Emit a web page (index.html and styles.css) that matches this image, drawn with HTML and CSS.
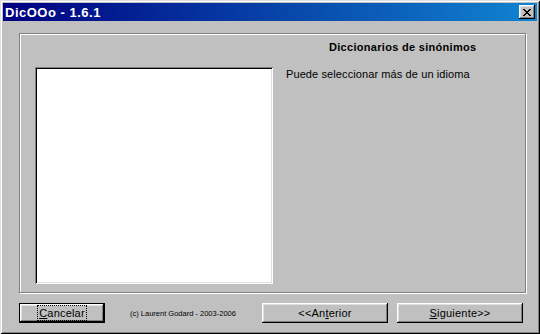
FILE: index.html
```html
<!DOCTYPE html>
<html>
<head>
<meta charset="utf-8">
<link rel="stylesheet" href="styles.css">
</head>
<body>
<div class="window">
  <div class="titlebar">
    <span class="title">DicOOo - 1.6.1</span>
    <span class="close"><svg width="8" height="7" viewBox="0 0 8 7"><path d="M0 0h2v1h1v1h2V1h1V0h2v1H7v1H6v1H5v1h1v1h1v1h1v1H6V6H5V5H3v1H2v1H0V6h1V5h1V4h1V3H2V2H1V1H0z" fill="#000"/></svg></span>
  </div>
  <div class="client">
    <div class="frame">
      <div class="heading">Diccionarios de sinónimos</div>
      <div class="listbox"></div>
      <div class="desc">Puede seleccionar más de un idioma</div>
    </div>
    <div class="buttons">
      <button class="btn default"><span class="focus"><u>C</u>ancelar</span></button>
      <span class="copy">(c) Laurent Godard - 2003-2006</span>
      <button class="btn wide prev">&lt;&lt;An<u>t</u>erior</button>
      <button class="btn wide next"><u>S</u>iguiente&gt;&gt;</button>
    </div>
  </div>
</div>
</body>
</html>
```

FILE: styles.css
```css
html, body {
  margin: 0;
  padding: 0;
  background: #c0c0c0;
}
body {
  font-family: "Liberation Sans", Arial, sans-serif;
  font-size: 11px;
  color: #000;
}
.window {
  width: 540px;
  height: 334px;
  box-sizing: border-box;
  padding: 3px;
  background: #c0c0c0;
  box-shadow: inset 1px 1px 0 #dfdfdf, inset -1px -1px 0 #000, inset 2px 2px 0 #fff, inset -2px -2px 0 #808080;
}
.titlebar {
  height: 18px;
  background: linear-gradient(90deg, #000080, #1084d0);
  display: flex;
  align-items: center;
  justify-content: space-between;
  padding: 0 2px 0 2px;
}
.title {
  color: #fff;
  font-weight: bold;
  font-size: 13px;
  letter-spacing: 0.5px;
}
.close {
  width: 16px;
  height: 14px;
  box-sizing: border-box;
  background: #c0c0c0;
  box-shadow: inset -1px -1px 0 #000, inset 1px 1px 0 #fff, inset -2px -2px 0 #808080, inset 2px 2px 0 #dfdfdf;
  display: flex;
  align-items: center;
  justify-content: center;
}
.close svg { display: block; margin-left: -1px; }
.client {
  padding: 12px 11px 0 16px;
}
.frame {
  width: 507px;
  height: 260px;
  box-sizing: border-box;
  border: 1px solid #808080;
  box-shadow: inset 1px 1px 0 #fff, 1px 1px 0 #fff;
  display: grid;
  grid-template-columns: 238px auto;
  grid-template-rows: 14px 217px;
  column-gap: 13px;
  row-gap: 13px;
  padding: 6px 0 0 15px;
}
.heading {
  grid-column: 2;
  grid-row: 1;
  font-weight: bold;
  font-size: 11px;
  line-height: 14px;
  padding-left: 43px;
  letter-spacing: 0.3px;
  white-space: nowrap;
}
.listbox {
  grid-column: 1;
  grid-row: 2;
  background: #fff;
  box-shadow: inset 1px 1px 0 #808080, inset -1px -1px 0 #fff, inset 2px 2px 0 #000, inset -2px -2px 0 #dfdfdf;
}
.desc {
  grid-column: 2;
  grid-row: 2;
  line-height: 14px;
  letter-spacing: 0.1px;
  white-space: nowrap;
}
.buttons {
  display: flex;
  align-items: center;
  margin-top: 10px;
  padding-right: 3px;
}
.btn {
  font-family: "Liberation Sans", Arial, sans-serif;
  font-size: 11px;
  letter-spacing: 0.2px;
  color: #000;
  height: 20px;
  padding: 0;
  margin: 0;
  border: none;
  background: #c0c0c0;
  box-shadow: inset -1px -1px 0 #000, inset 1px 1px 0 #fff, inset -2px -2px 0 #808080, inset 2px 2px 0 #dfdfdf;
  display: flex;
  align-items: center;
  justify-content: center;
}
.default {
  width: 86px;
  border: 1px solid #000;
  box-sizing: border-box;
}
.focus {
  outline: 1px dotted #000;
  outline-offset: 0;
  padding: 0 1px;
  line-height: 14px;
}
.copy {
  font-size: 7.5px;
  margin-left: 25px;
  color: #000;
}
.wide {
  width: 126px;
  box-sizing: border-box;
}
.prev {
  margin-left: auto;
}
.next {
  margin-left: 9px;
}
u { text-decoration: underline; text-underline-offset: 1px; }
```
